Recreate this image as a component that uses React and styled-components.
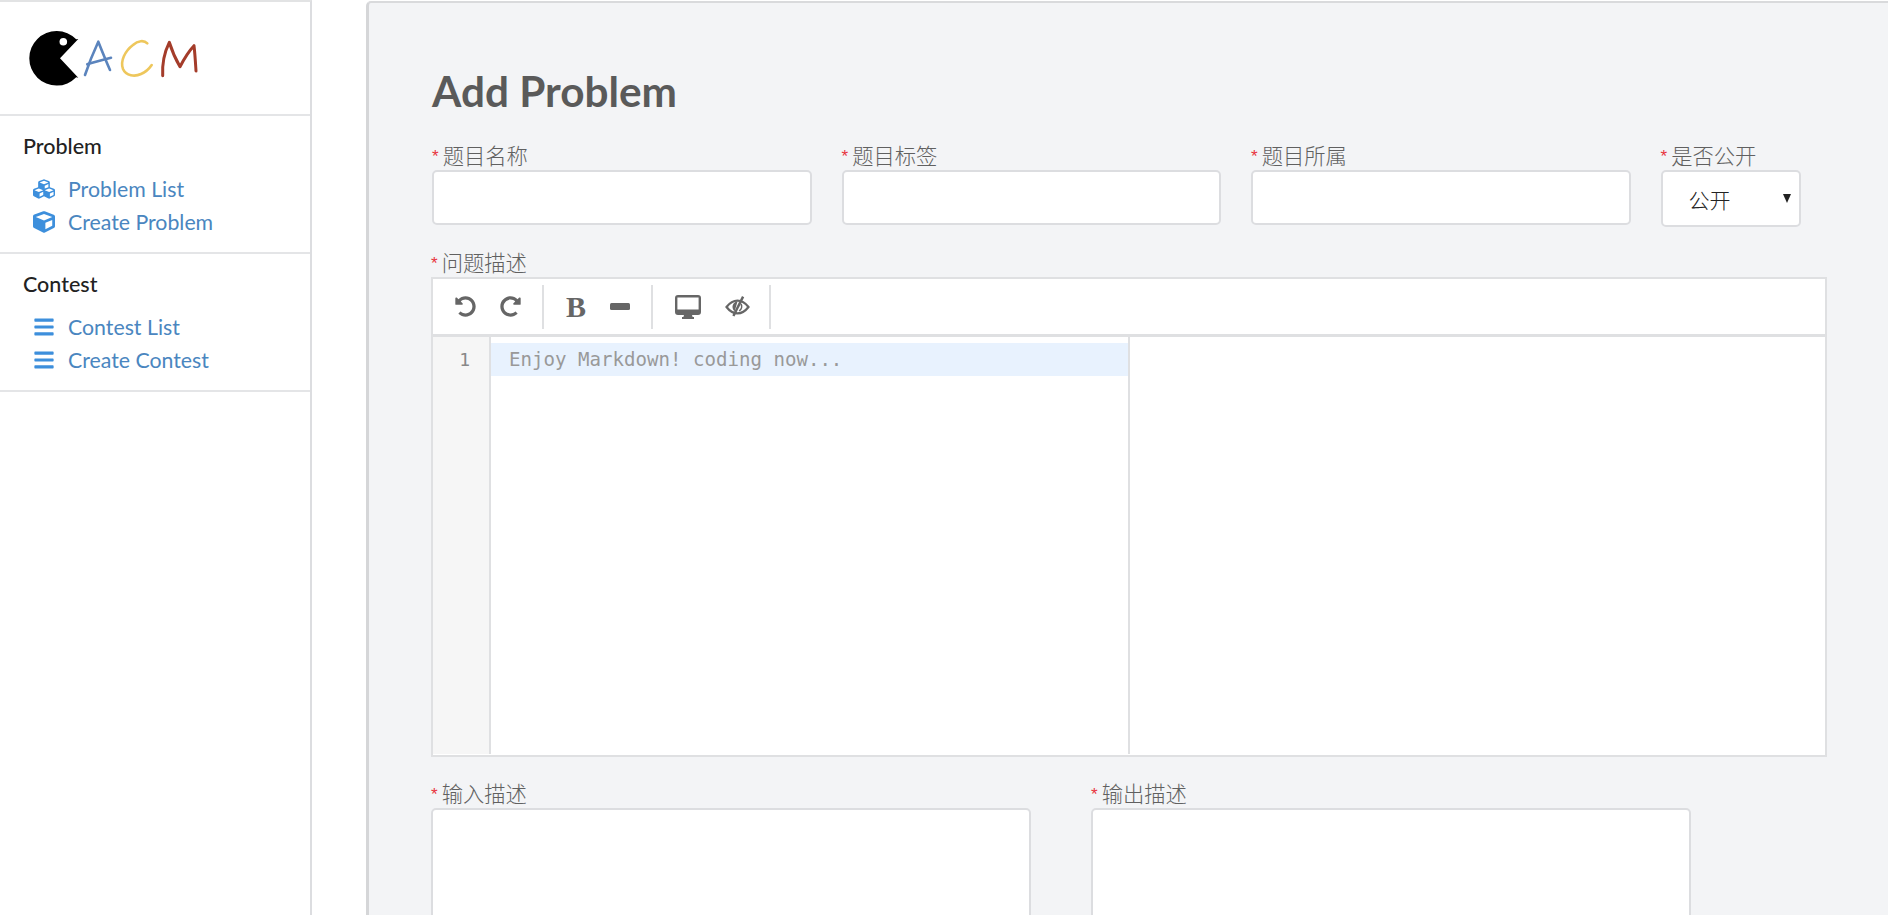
import styled, { createGlobalStyle } from "styled-components";
import {
  FaCubes,
  FaCube,
  FaBars,
  FaUndoAlt,
  FaRedoAlt,
} from "react-icons/fa";

const GlobalStyle = createGlobalStyle`
  html, body {
    margin: 0;
    height: 100%;
    overflow: hidden;
    background: #fff;
  }
  body {
    font-family: Lato, "Noto Sans CJK SC", sans-serif;
  }
  * {
    box-sizing: border-box;
  }
`;

const Page = styled.div`
  display: flex;
  align-items: flex-start;
  height: 915px;
  overflow: hidden;
`;

const Sidebar = styled.aside`
  width: 312px;
  height: 915px;
  flex-shrink: 0;
  border-top: 2px solid #e2e3e4;
  border-right: 2px solid #dcdde0;
`;

const LogoBox = styled.div`
  height: 114px;
  padding: 29px 0 0 28px;
  border-bottom: 2px solid #e4e5e7;
`;

const Section = styled.section`
  height: 138px;
  padding: 18px 0 0 23px;
  border-bottom: 2px solid #e4e5e7;
`;

const SectionTitle = styled.h3`
  margin: 0 0 14px;
  font-size: 21.5px;
  line-height: 24px;
  font-weight: 500;
  color: #222;
`;

const NavItem = styled.a`
  display: flex;
  align-items: center;
  height: 33px;
  padding-left: 10px;
  font-size: 21.3px;
  color: #4a86c0;

  svg {
    width: 22px;
    height: 22px;
    color: #3d8fdc;
    margin-right: 13px;
    flex-shrink: 0;
  }
`;

const Panel = styled.main`
  flex: 1;
  height: 915px;
  margin-left: 54px;
  margin-top: 1px;
  padding: 62px 0 0 63px;
  background: #f3f4f6;
  border-top: 2px solid #d9dadc;
  border-left: 3px solid #d5d6d8;
  border-top-left-radius: 5px;
`;

const Title = styled.h1`
  margin: 0 0 29px;
  font-size: 42.3px;
  line-height: 52px;
  font-weight: 700;
  color: #5a5a5a;
`;

const FieldRow = styled.div`
  display: grid;
  grid-template-columns: 379.5px 379.5px 379.5px 140px;
  column-gap: 30px;
  align-items: start;
`;

const Label = styled.label`
  display: block;
  height: 24px;
  font-family: "Noto Sans CJK SC", Lato, sans-serif;
  font-size: 21.3px;
  line-height: 17px;
  font-weight: 300;
  color: #606060;

  &::before {
    content: "*";
    color: #e8333f;
    font-size: 17px;
    margin-right: 4px;
    font-family: "Liberation Sans", sans-serif;
    vertical-align: 2px;
  }
`;

const TextInput = styled.input`
  display: block;
  width: 100%;
  height: 55px;
  background: #fff;
  border: 2px solid #dcdde0;
  border-radius: 5px;
  outline: none;
`;

const SelectBox = styled.div`
  position: relative;
  height: 57px;
  padding: 0 0 0 26px;
  display: flex;
  align-items: center;
  background: #fff;
  border: 2px solid #dcdde0;
  border-radius: 5px;
  font-family: "Noto Sans CJK SC", sans-serif;
  font-size: 21px;
  font-weight: 300;
  color: #222;
`;

const Caret = styled.span`
  position: absolute;
  right: 8px;
  top: 22px;
  width: 0;
  height: 0;
  border-left: 4px solid transparent;
  border-right: 4px solid transparent;
  border-top: 9px solid #222;
`;

const EditorLabel = styled(Label)`
  margin-top: 26px;
  margin-left: -1px;
`;

const Editor = styled.div`
  width: 1396px;
  height: 480px;
  margin-left: -1px;
  background: #fff;
  border: 2px solid #dfe0e2;
`;

const Toolbar = styled.div`
  display: flex;
  align-items: center;
  height: 58px;
  padding-left: 4px;
  border-bottom: 3px solid #dfe0e2;
`;

const ToolGroup = styled.div`
  display: flex;
  align-items: center;
  height: 44px;
  gap: ${(p) => p.$gap}px;
  padding: 0 ${(p) => p.$right}px 0 ${(p) => p.$left}px;
  border-right: 2px solid #dfe0e2;
  color: #666;

  svg {
    display: block;
    flex-shrink: 0;
  }
`;

const BoldGlyph = styled.span`
  font-family: "Liberation Serif", serif;
  font-weight: 700;
  font-size: 30px;
  line-height: 30px;
  color: #666;
`;

const EditorBody = styled.div`
  display: flex;
  height: 417px;
`;

const Gutter = styled.div`
  width: 58px;
  padding-top: 7px;
  padding-right: 19px;
  text-align: right;
  background: #f6f6f6;
  border-right: 2px solid #dfe0e2;
  font-family: "DejaVu Sans Mono", monospace;
  font-size: 18px;
  line-height: 32px;
  color: #888;
`;

const CodePane = styled.div`
  width: 639px;
  padding-top: 6px;
  border-right: 2px solid #dfe0e2;
`;

const CodeLine = styled.div`
  height: 33px;
  padding-left: 18px;
  background: #e8f2fe;
  font-family: "DejaVu Sans Mono", monospace;
  font-size: 19.1px;
  line-height: 33px;
  color: #999;
`;

const DescRow = styled.div`
  display: grid;
  grid-template-columns: 600px 600px;
  column-gap: 60px;
  margin-top: 27px;
  margin-left: -1px;
`;

const TextArea = styled.div`
  height: 300px;
  background: #fff;
  border: 2px solid #dcdde0;
  border-radius: 5px;
`;

const Logo = () => (
  <svg width="172" height="58" viewBox="0 0 172 58" fill="none">
    <path
      d="M50.3 8 L48.2 8.3 A27.3 27.3 0 1 0 48.2 46.3 L50.3 46.7 L32 27.3 Z"
      fill="#000"
    />
    <circle cx="35.3" cy="10.7" r="3.8" fill="#fff" />
    <g strokeLinecap="round" strokeLinejoin="round">
      <g stroke="#5b84bd" strokeWidth="2.6">
        <path d="M57 44 C61 32 66 20 70.3 10.7 C74 20 78 30 82 39" />
        <path d="M59.3 33.3 C67 31 75 28.5 83 26.7" />
      </g>
      <path
        d="M119.3 12.3 C116 9 110 9.5 105 14 C97 20 92 30 95 38 C98 45 107 46 113 43 C118 41 121 38 123.7 34"
        stroke="#eec75c"
        strokeWidth="2.6"
      />
      <path
        d="M134.7 44.7 C134 32 137 20 141.3 11.3 C144 20 148 29 152 35.7 C156 28 161 20 166 14.7 C167 23 167.5 32 168 40"
        stroke="#a43c2a"
        strokeWidth="3"
      />
    </g>
  </svg>
);

const MinusIcon = () => (
  <svg width="20" height="7" viewBox="0 0 20 7">
    <rect width="20" height="7" rx="1.5" fill="currentColor" />
  </svg>
);

const DesktopIcon = () => (
  <svg width="26" height="24" viewBox="0 0 26 24">
    <path
      fill="currentColor"
      fillRule="evenodd"
      d="M3 0 H23 A3 3 0 0 1 26 3 V17 A3 3 0 0 1 23 20 H17 L17.6 22 H19 V24 H7 V22 H8.4 L9 20 H3 A3 3 0 0 1 0 17 V3 A3 3 0 0 1 3 0 Z M2.4 2.4 V14.6 H23.6 V2.4 Z"
    />
  </svg>
);

const EyeOffIcon = () => (
  <svg width="25" height="21" viewBox="0 0 25 21">
    <path
      fill="none"
      stroke="currentColor"
      strokeWidth="2.2"
      d="M1.5 11 C5 6.5 8.5 4.6 12.5 4.6 C16.5 4.6 20 6.5 23.5 11 C20 15.5 16.5 17.4 12.5 17.4 C8.5 17.4 5 15.5 1.5 11 Z"
    />
    <path
      fill="currentColor"
      d="M12.5 5.5 C9.5 5.5 7.5 8 7.5 11 C7.5 12.8 8.4 14.4 9.7 15.3 Z"
    />
    <path fill="currentColor" d="M17 0 L19.2 1.2 L9.5 20.6 L7.3 19.4 Z" />
    <path
      fill="none"
      stroke="currentColor"
      strokeWidth="1.6"
      d="M16 8 C17.2 10 16.8 13 14.2 14.8"
    />
  </svg>
);

const sections = [
  {
    title: "Problem",
    items: [
      { text: "Problem List", Icon: FaCubes },
      { text: "Create Problem", Icon: FaCube },
    ],
  },
  {
    title: "Contest",
    items: [
      { text: "Contest List", Icon: FaBars },
      { text: "Create Contest", Icon: FaBars },
    ],
  },
];

const fields = ["题目名称", "题目标签", "题目所属"];

export default function App() {
  return (
    <>
      <GlobalStyle />
      <Page>
        <Sidebar>
          <LogoBox>
            <Logo />
          </LogoBox>
          {sections.map((section) => (
            <Section key={section.title}>
              <SectionTitle>{section.title}</SectionTitle>
              {section.items.map(({ text, Icon }) => (
                <NavItem key={text}>
                  <Icon />
                  {text}
                </NavItem>
              ))}
            </Section>
          ))}
        </Sidebar>
        <Panel>
          <Title>Add Problem</Title>
          <FieldRow>
            {fields.map((name) => (
              <div key={name}>
                <Label>{name}</Label>
                <TextInput />
              </div>
            ))}
            <div>
              <Label>是否公开</Label>
              <SelectBox>
                公开
                <Caret />
              </SelectBox>
            </div>
          </FieldRow>
          <EditorLabel>问题描述</EditorLabel>
          <Editor>
            <Toolbar>
              <ToolGroup $gap={24} $left={18} $right={21}>
                <FaUndoAlt size={21} />
                <FaRedoAlt size={21} />
              </ToolGroup>
              <ToolGroup $gap={24} $left={22} $right={21}>
                <BoldGlyph>B</BoldGlyph>
                <MinusIcon />
              </ToolGroup>
              <ToolGroup $gap={24} $left={22} $right={19}>
                <DesktopIcon />
                <EyeOffIcon />
              </ToolGroup>
            </Toolbar>
            <EditorBody>
              <Gutter>1</Gutter>
              <CodePane>
                <CodeLine>Enjoy Markdown! coding now...</CodeLine>
              </CodePane>
            </EditorBody>
          </Editor>
          <DescRow>
            <div>
              <Label>输入描述</Label>
              <TextArea />
            </div>
            <div>
              <Label>输出描述</Label>
              <TextArea />
            </div>
          </DescRow>
        </Panel>
      </Page>
    </>
  );
}
